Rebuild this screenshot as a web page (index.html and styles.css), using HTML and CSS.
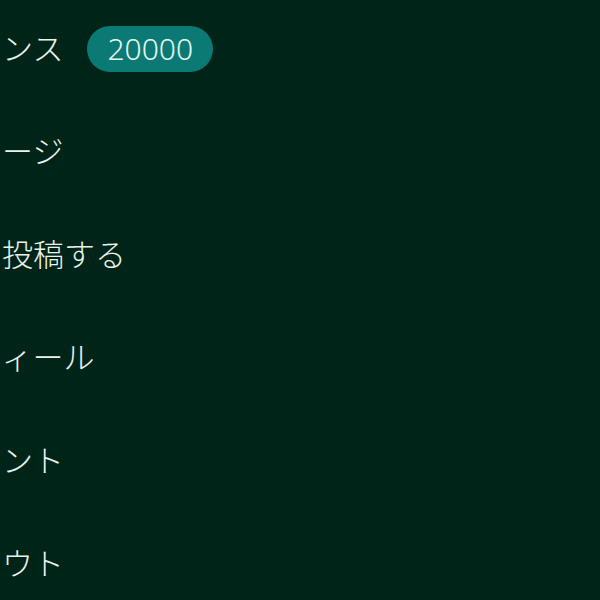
FILE: index.html
```html
<!DOCTYPE html>
<html lang="ja">
<head>
  <meta charset="UTF-8">
  <meta name="viewport" content="width=device-width, initial-scale=1.0">
  <title>メニュー</title>
  <link rel="stylesheet" href="styles.css">
</head>
<body>
  <nav class="menu">
    <a class="menu-item" href="#">
      <span class="label">ライセンス</span>
      <span class="badge">20000</span>
    </a>
    <a class="menu-item" href="#">
      <span class="label">メッセージ</span>
    </a>
    <a class="menu-item" href="#">
      <span class="label">記事を投稿する</span>
    </a>
    <a class="menu-item" href="#">
      <span class="label">プロフィール</span>
    </a>
    <a class="menu-item" href="#">
      <span class="label">アカウント</span>
    </a>
    <a class="menu-item" href="#">
      <span class="label">ログアウト</span>
    </a>
  </nav>
</body>
</html>
```

FILE: styles.css
```css
html, body {
  height: 100%;
}
body {
  margin: 0;
  overflow: hidden;
  background-color: #012418;
  color: #eaf3ec;
  font-family: "Noto Sans", "Noto Sans CJK JP", sans-serif;
  font-weight: 300;
}
.menu {
  display: flex;
  flex-direction: column;
  margin-top: -3px;
  margin-left: -91px;
}
.menu-item {
  display: flex;
  align-items: center;
  height: 103px;
  color: inherit;
  text-decoration: none;
  white-space: nowrap;
}
.label {
  font-size: 31px;
  line-height: 1;
}
.badge {
  display: flex;
  align-items: center;
  height: 46px;
  margin-left: 24px;
  padding: 0 20px;
  border-radius: 23px;
  background-color: #0b7a74;
  color: #e3f6f1;
  font-size: 30px;
  line-height: 1;
}
```
